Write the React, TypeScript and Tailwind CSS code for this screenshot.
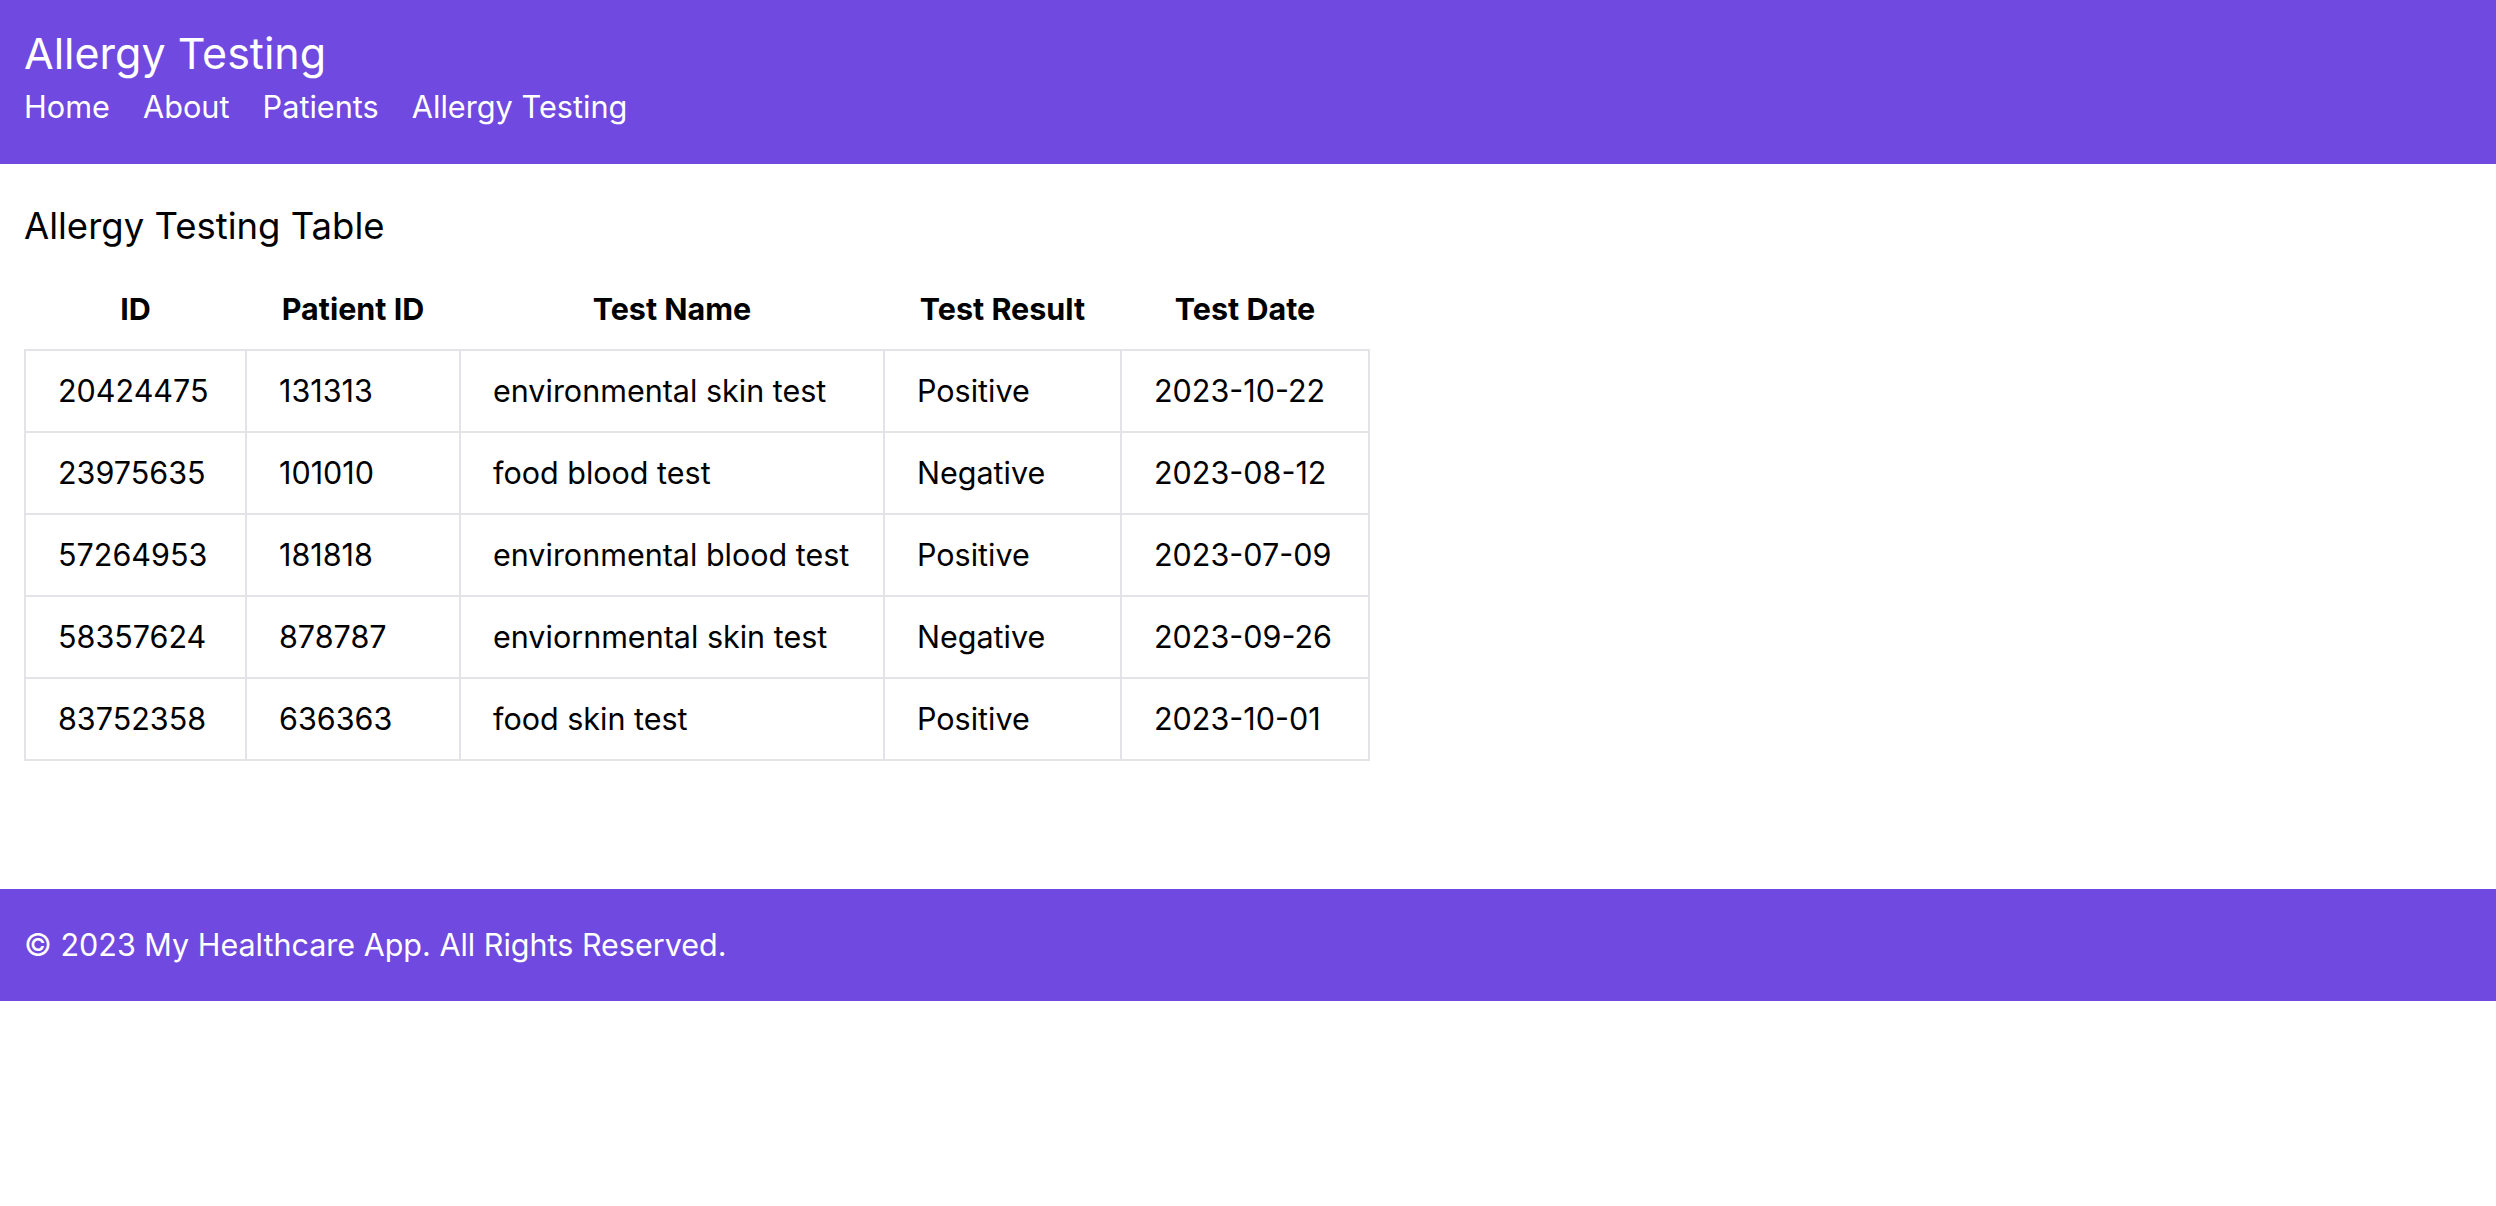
import React from "react";

// allergy test rows
const tests = [
  { id: "20424475", patientId: "131313", name: "environmental skin test", result: "Positive", date: "2023-10-22" },
  { id: "23975635", patientId: "101010", name: "food blood test", result: "Negative", date: "2023-08-12" },
  { id: "57264953", patientId: "181818", name: "environmental blood test", result: "Positive", date: "2023-07-09" },
  { id: "58357624", patientId: "878787", name: "enviornmental skin test", result: "Negative", date: "2023-09-26" },
  { id: "83752358", patientId: "636363", name: "food skin test", result: "Positive", date: "2023-10-01" },
];

export default function App() {
  return (
    <div className="min-h-screen bg-white text-black font-['Inter','Liberation_Sans',sans-serif]">
      {/* =============================
          HEADER
      ============================= */}
      <header className="h-[164px] bg-[#7049e1] px-[24px] pt-[22px] text-white">
        <h1 className="text-[43px] leading-[62px] font-normal">Allergy Testing</h1>
        <nav className="flex gap-[33px] text-[30.7px] leading-[46px]">
          <a href="#">Home</a>
          <a href="#">About</a>
          <a href="#">Patients</a>
          <a href="#">Allergy Testing</a>
        </nav>
      </header>

      {/* =============================
          MAIN
      ============================= */}
      <main className="px-[24px] pt-[38px] pb-[128px]">
        <h2 className="text-[36.5px] leading-[48px] font-normal">Allergy Testing Table</h2>

        <table className="mt-[35px] border-collapse text-[30.5px] leading-[48px] whitespace-nowrap">
          <thead>
            <tr>
              <th className="w-[221px] pb-[16px] font-bold text-center">ID</th>
              <th className="w-[214px] pb-[16px] font-bold text-center">Patient ID</th>
              <th className="w-[424px] pb-[16px] font-bold text-center">Test Name</th>
              <th className="w-[237px] pb-[16px] font-bold text-center">Test Result</th>
              <th className="w-[248px] pb-[16px] font-bold text-center">Test Date</th>
            </tr>
          </thead>
          <tbody>
            {tests.map((t) => (
              <tr key={t.id}>
                <td className="border-2 border-[#e3e3e8] px-[32px] py-[16px]">{t.id}</td>
                <td className="border-2 border-[#e3e3e8] px-[32px] py-[16px]">{t.patientId}</td>
                <td className="border-2 border-[#e3e3e8] px-[32px] py-[16px]">{t.name}</td>
                <td className="border-2 border-[#e3e3e8] px-[32px] py-[16px]">{t.result}</td>
                <td className="border-2 border-[#e3e3e8] px-[32px] py-[16px]">{t.date}</td>
              </tr>
            ))}
          </tbody>
        </table>
      </main>

      {/* =============================
          FOOTER
      ============================= */}
      <footer className="h-[112px] bg-[#7049e1] px-[24px] flex items-center text-white text-[30.5px]">
        © 2023 My Healthcare App. All Rights Reserved.
      </footer>
    </div>
  );
}
